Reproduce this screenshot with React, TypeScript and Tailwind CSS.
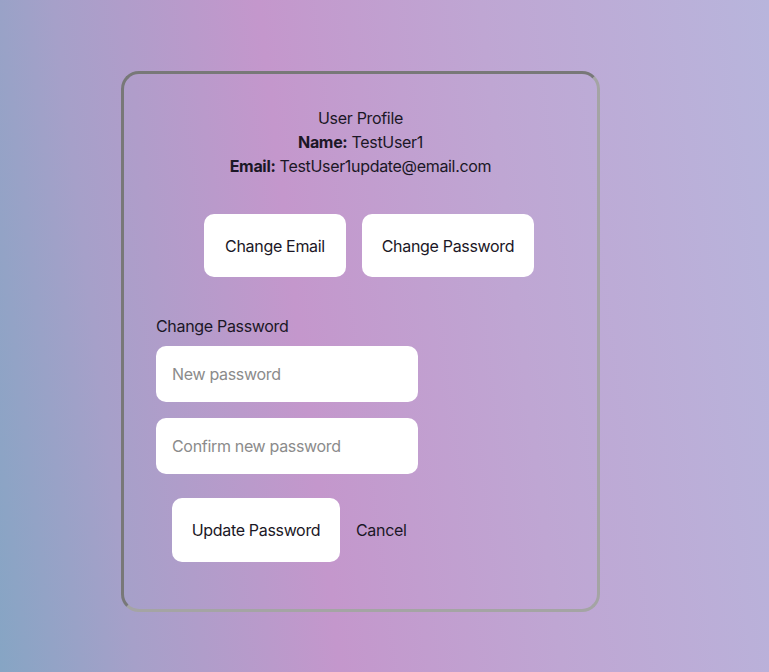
import React from "react";

export default function App() {
  return (
    <div
      className="w-[769px] h-[672px] overflow-hidden bg-[linear-gradient(83deg,#86a5c4_0%,#a6a0c9_16%,#c497cc_40%,#bfa6d3_66%,#b8b5dc_100%)] text-[#1b1726] text-[16px] tracking-[-0.02em]"
      style={{ fontFamily: "Inter, 'Noto Sans', sans-serif" }}
    >
      <div className="ml-[121px] mt-[71px] w-[479px] h-[541px] rounded-[18px] border-[3px] border-t-[#787878] border-l-[#787878] border-b-[#a4a4a4] border-r-[#a4a4a4] pt-[32px] px-[32px]">
        <div className="flex flex-col items-center leading-[24px]">
          <div>User Profile</div>
          <div>
            <span className="font-bold">Name:</span> TestUser1
          </div>
          <div>
            <span className="font-bold">Email:</span> TestUser1update@email.com
          </div>
        </div>
        <div className="mt-[36px] flex justify-center gap-[16px] pl-[17px]">
          <button className="h-[63px] w-[142px] rounded-[10px] bg-white tracking-[-0.02em]">Change Email</button>
          <button className="h-[63px] w-[172px] rounded-[10px] bg-white tracking-[-0.02em]">Change Password</button>
        </div>
        <div className="mt-[37px] leading-[24px]">Change Password</div>
        <div className="mt-[8px] flex flex-col gap-[16px]">
          <input
            type="password"
            placeholder="New password"
            className="h-[56px] w-[262px] rounded-[10px] bg-white px-[16px] tracking-[-0.02em] outline-none placeholder:text-[#8b8b8b]"
          />
          <input
            type="password"
            placeholder="Confirm new password"
            className="h-[56px] w-[262px] rounded-[10px] bg-white px-[16px] tracking-[-0.02em] outline-none placeholder:text-[#8b8b8b]"
          />
        </div>
        <div className="mt-[24px] ml-[16px] flex items-center gap-[16px]">
          <button className="h-[64px] w-[168px] rounded-[10px] bg-white tracking-[-0.02em]">Update Password</button>
          <button className="bg-transparent tracking-[-0.02em]">Cancel</button>
        </div>
      </div>
    </div>
  );
}
